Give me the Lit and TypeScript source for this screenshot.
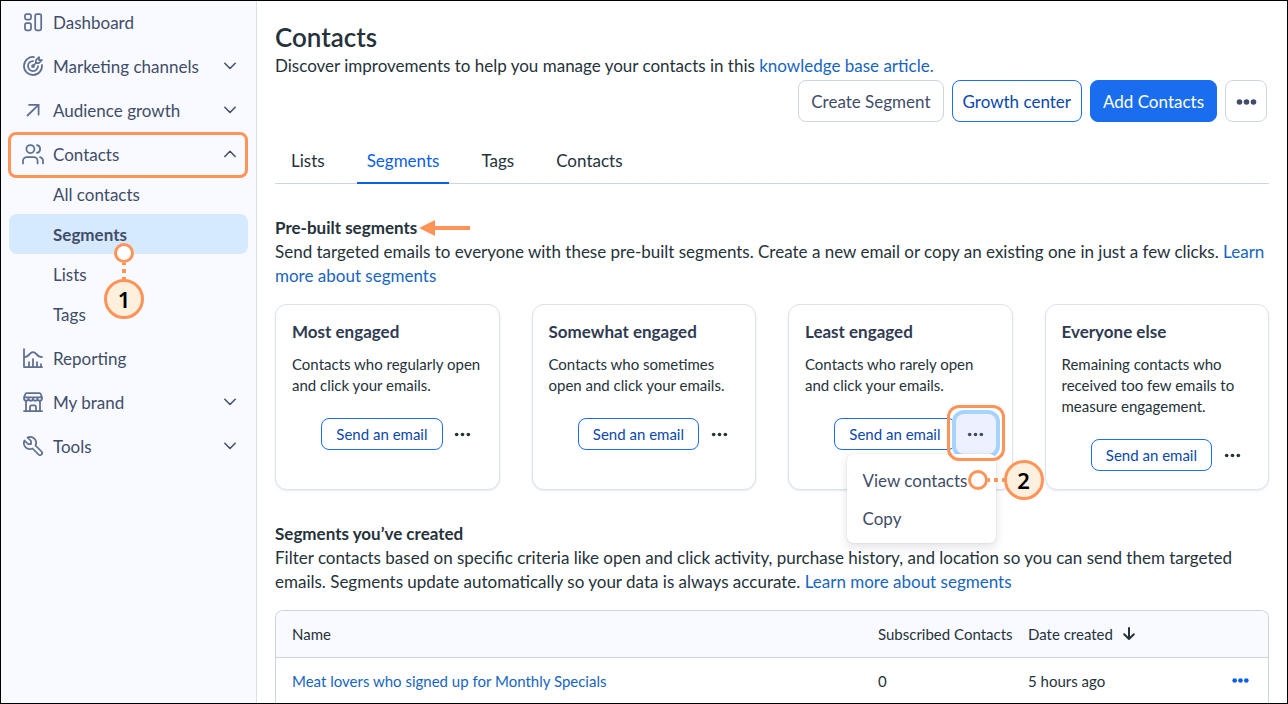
import { LitElement, html, svg, css, nothing } from "lit";
import { customElement, property } from "lit/decorators.js";
import { classMap } from "lit/directives/class-map.js";

const ICONS: Record<string, unknown> = {
  dashboard: svg`<rect x="4" y="4" width="6" height="5.6" rx="1.6"/><rect x="4" y="13" width="6" height="7.4" rx="1.6"/><rect x="14.2" y="4" width="6" height="16.4" rx="1.6"/>`,
  target: svg`<circle cx="12" cy="12" r="1"/><path d="M12 7a5 5 0 1 0 5 5"/><path d="M13 3.055a9 9 0 1 0 7.941 7.945"/><path d="M15 6v3h3l3-3h-3V3z"/><path d="M15 9l-3 3"/>`,
  growth: svg`<path d="M6.5 17.5 17.5 6.8"/><path d="M8 6.8h9.6v9.7"/>`,
  people: svg`<circle cx="9.4" cy="7" r="4"/><path d="M16.6 21.4v-2.4a4 4 0 0 0-4-4H6a4 4 0 0 0-4 4v2.4"/><path d="M22 21.4v-2.4a4 4 0 0 0-3-3.9"/><path d="M16 3.1a4 4 0 0 1 0 7.8"/>`,
  chart: svg`<path d="M3 3v18h18"/><path d="M20 18v3M16 16v5M12 13v8M8 16v5"/><path d="M3 11c6 0 5-5 9-5s3 5 9 5"/>`,
  store: svg`<path d="M3 21h18M5 21V11M19 21V11"/><path d="M9 21v-4a1.6 1.6 0 0 1 1.6-1.6h2.8A1.6 1.6 0 0 1 15 17v4"/><path d="M3 7.4 4.2 4.2A1.6 1.6 0 0 1 5.7 3h12.6a1.6 1.6 0 0 1 1.5 1.2L21 7.4v1a2.25 2.25 0 0 1-4.5 0 2.25 2.25 0 0 1-4.5 0 2.25 2.25 0 0 1-4.5 0 2.25 2.25 0 0 1-4.5 0zM3 7.4h18"/>`,
  tool: svg`<path d="M7 10h3V7L6.5 3.5a6 6 0 0 1 8 8l6 6a2 2 0 0 1-3 3l-6-6a6 6 0 0 1-8-8z"/>`,
};

const chevron = (up: boolean) => html`<svg class="chevron" viewBox="0 0 12 8" aria-hidden="true"><path d=${up ? "M.8 6.5 6 1.3l5.2 5.2" : "M.8 1.3 6 6.5l5.2-5.2"} /></svg>`;

const dots = (cls: string, r: number) => html`<svg class=${cls} viewBox="0 0 20 6" aria-hidden="true"><circle cx="3" cy="3" r=${r}/><circle cx="10" cy="3" r=${r}/><circle cx="17" cy="3" r=${r}/></svg>`;

const base = css`
  * { box-sizing: border-box; }
  a { text-decoration: none; color: inherit; }
  button { font: inherit; cursor: pointer; margin: 0; }
  svg { display: block; flex: none; }
`;

@customElement("step-marker")
class StepMarker extends LitElement {
  @property() label = "";
  @property({ reflect: true }) direction = "down";
  static styles = css`
    :host { position: absolute; display: flex; align-items: center; z-index: 5; }
    :host([direction="down"]) { flex-direction: column; }
    .ring { box-sizing: border-box; width: 20px; height: 20px; border: 3px solid #ff9358; border-radius: 50%; background: #fff; }
    .line { width: 16px; height: 4px; background: linear-gradient(90deg, #ff9358 0 2px, transparent 2px 6px, #ff9358 6px 10px, transparent 10px 14px, #ff9358 14px 16px); }
    :host([direction="down"]) .line { width: 4px; height: 16px; background: linear-gradient(#ff9358 0 2px, transparent 2px 6px, #ff9358 6px 10px, transparent 10px 14px, #ff9358 14px 16px); }
    .disc { box-sizing: border-box; width: 40px; height: 40px; display: grid; place-items: center; border: 3px solid #ff9358; border-radius: 50%; background: #ffefdd; color: #000; font: 600 22px/24px "Noto Sans", sans-serif; }
  `;
  render() {
    return html`<span class="ring"></span><span class="line"></span><span class="disc">${this.label}</span>`;
  }
}

interface NavItem { label: string; icon: string; expandable?: boolean; children?: string[]; }

const NAV: NavItem[] = [
  { label: "Dashboard", icon: "dashboard" },
  { label: "Marketing channels", icon: "target", expandable: true },
  { label: "Audience growth", icon: "growth", expandable: true },
  { label: "Contacts", icon: "people", expandable: true, children: ["All contacts", "Segments", "Lists", "Tags"] },
  { label: "Reporting", icon: "chart" },
  { label: "My brand", icon: "store", expandable: true },
  { label: "Tools", icon: "tool", expandable: true },
];

@customElement("side-nav")
class SideNav extends LitElement {
  static styles = [base, css`
    :host { display: block; }
    nav { display: flex; flex-direction: column; gap: 4px; padding: 1px 8px; }
    .item, .sub { width: 100%; height: 40px; display: flex; align-items: center; border: 0; border-radius: 8px; background: none; color: #414d68; text-align: left; }
    .item { gap: 8px; padding: 0 12px; position: relative; }
    .icon { width: 24px; height: 24px; fill: none; stroke: #5f6f8f; stroke-width: 1.75; stroke-linecap: round; stroke-linejoin: round; }
    .chevron { width: 12px; height: 8px; fill: none; stroke: #414d68; stroke-width: 1.5; stroke-linecap: round; stroke-linejoin: round; }
    .text { flex: 1; padding-top: 1px; }
    .callout::after { content: ""; position: absolute; inset: -2px 0 -4px -1px; border: 3px solid #ff9358; border-radius: 8px; pointer-events: none; }
    .sub { position: relative; padding: 1px 44px 0; }
    .current { background: #d5e9ff; font-weight: 700; }
    step-marker { left: 95px; top: 29px; font-weight: 400; }
  `];
  render() {
    return html`<nav aria-label="Main">
      ${NAV.map((n) => {
        const body = html`<svg class="icon" viewBox="0 0 24 24" aria-hidden="true">${ICONS[n.icon]}</svg><span class="text">${n.label}</span>${n.expandable ? chevron(!!n.children) : nothing}`;
        const item = n.expandable
          ? html`<button class=${classMap({ item: true, callout: !!n.children })} aria-expanded=${n.children ? "true" : "false"}>${body}</button>`
          : html`<a class="item" href="#">${body}</a>`;
        return html`<div>${item}${n.children?.map((c) => html`<a href="#" class=${classMap({ sub: true, current: c === "Segments" })}>${c}${c === "Segments" ? html`<step-marker label="1"></step-marker>` : nothing}</a>`)}</div>`;
      })}
    </nav>`;
  }
}

@customElement("segment-card")
class SegmentCard extends LitElement {
  @property() heading = "";
  @property() text = "";
  @property({ type: Boolean }) open = false;
  static styles = [base, css`
    :host { display: block; border: 1px solid #dce2ee; border-radius: 12px; padding: 16px 16px 14px; background: #fff; box-shadow: 0 1px 2px rgba(60, 80, 140, 0.12); }
    h3 { margin: 0 0 12px; font-size: 17px; line-height: 21px; font-weight: 700; color: #2f3b53; }
    p { margin: 0 0 18px; font-size: 15px; line-height: 21px; color: #25323a; }
    .actions { display: flex; justify-content: flex-end; align-items: center; position: relative; }
    .send { height: 32px; padding: 0 14px; border: 1px solid #1a6dee; border-radius: 8px; background: #fff; color: #0a48ab; font-size: 15px; line-height: 20px; white-space: nowrap; }
    .more { width: 40px; height: 40px; display: grid; place-items: center; border: 0; border-radius: 8px; background: none; padding: 0; }
    .dots { width: 17px; height: 5px; fill: #25323a; }
    .anchor { position: relative; }
    .open .more { background: #edf0ff; box-shadow: 0 0 0 4px #a6d3ff; }
    .open .dots { fill: #414d68; }
    .open::after { content: ""; position: absolute; inset: -9px -9px -7px; border: 3px solid #ff9358; border-radius: 12px; z-index: 3; pointer-events: none; }
    .menu { position: absolute; top: 40px; right: 0; z-index: 2; width: 149px; padding: 7px 0 6px; border-radius: 6px; background: #fff; box-shadow: 0 0 1px rgba(60, 80, 140, 0.35), 0 4px 10px rgba(40, 50, 80, 0.14); }
    .menu button { display: block; width: 100%; height: 38px; padding: 1px 16px 0; border: 0; background: none; color: #414d68; text-align: left; font-size: 17px; white-space: nowrap; }
    step-marker { left: 12px; top: 46px; }
  `];
  render() {
    return html`<h3>${this.heading}</h3><p>${this.text}</p>
      <div class="actions">
        <button class="send">Send an email</button>
        <div class=${classMap({ anchor: true, open: this.open })}>
          <button class="more" aria-label="More actions" aria-expanded=${this.open ? "true" : "false"}>${dots("dots", 2.2)}</button>
          ${this.open ? html`<div class="menu" role="menu"><button role="menuitem">View contacts</button><button role="menuitem">Copy</button></div><step-marker label="2" direction="right"></step-marker>` : nothing}
        </div>
      </div>`;
  }
}

const CARDS = [
  { heading: "Most engaged", text: "Contacts who regularly open and click your emails." },
  { heading: "Somewhat engaged", text: "Contacts who sometimes open and click your emails." },
  { heading: "Least engaged", text: "Contacts who rarely open and click your emails.", open: true },
  { heading: "Everyone else", text: "Remaining contacts who received too few emails to measure engagement." },
];

@customElement("app-root")
class AppRoot extends LitElement {
  static styles = [base, css`
    :host { display: block; font: 400 17px/24px Lato, "Liberation Sans", sans-serif; color: #25323a; }
    .shell { display: grid; grid-template-columns: 256px minmax(0, 1fr); height: 100vh; overflow: hidden; border: 1px solid #000; background: #fff; }
    side-nav { background: #f8faff; border-right: 1px solid #d9e0ee; }
    main { padding: 19px 18px 0; }
    h1 { margin: 0; font-size: 26px; line-height: 34px; font-weight: 600; }
    h2 { margin: 0; font-size: 17px; line-height: 24px; font-weight: 700; }
    p { margin: 0; }
    .link { color: #1765bf; }
    .toolbar { display: flex; justify-content: flex-end; gap: 8px; padding: 2px 2px 0 0; }
    .btn { height: 42px; padding: 2px 12px 0; border: 1px solid #cdd4e2; border-radius: 8px; background: #fff; color: #414d68; }
    .outline { padding: 2px 10px 0; border-color: #1a6dee; color: #0a48ab; }
    .primary { border-color: #1a6dee; background: #1a6dee; color: #fff; }
    .square { width: 42px; padding: 2px 0 0; display: grid; place-items: center; }
    .big { width: 21px; height: 6px; fill: #414d68; }
    .tabs { display: flex; gap: 22px; margin: 16px 0 32px; padding: 0 6px; border-bottom: 1px solid #cbd6da; }
    .tab { padding: 12px 10px 9px; border-bottom: 2px solid transparent; line-height: 22px; }
    .tab.active { color: #0c5fe5; border-color: #0c5fe5; margin-bottom: -1px; }
    .heading { display: flex; align-items: center; gap: 2px; }
    .arrow { width: 51px; height: 16px; fill: #ff9358; }
    .cards { display: grid; grid-template-columns: repeat(4, minmax(0, 1fr)); gap: 32px; margin: 16px 0 32px; }
    .table-box { margin-top: 16px; border: 1px solid #cbd6da; border-bottom: 0; border-radius: 8px 8px 0 0; overflow: hidden; }
    table { width: 100%; border-collapse: collapse; table-layout: fixed; font-size: 15px; }
    th, td { height: 46px; padding: 0 0 0 16px; text-align: left; font-weight: 400; }
    td { height: 47px; }
    th { background: #f8faff; border-bottom: 1px solid #cbd6da; white-space: nowrap; }
    .c-count { width: 150px; }
    .c-date { width: 204px; }
    .c-menu { width: 52px; }
    .sort { display: flex; align-items: center; gap: 10px; padding: 0; border: 0; background: none; color: inherit; }
    .sort svg { width: 12px; height: 13px; fill: none; stroke: #25323a; stroke-width: 2; stroke-linecap: round; stroke-linejoin: round; }
    .row-menu { display: block; padding: 8px 0; border: 0; background: none; }
    .blue { width: 17px; height: 5px; fill: #0c5fe5; }
  `];
  render() {
    return html`<div class="shell">
      <side-nav></side-nav>
      <main>
        <h1>Contacts</h1>
        <p>Discover improvements to help you manage your contacts in this <a class="link" href="#">knowledge base article.</a></p>
        <div class="toolbar">
          <button class="btn">Create Segment</button>
          <button class="btn outline">Growth center</button>
          <button class="btn primary">Add Contacts</button>
          <button class="btn square" aria-label="More">${dots("big", 2.8)}</button>
        </div>
        <nav class="tabs" aria-label="Contacts sections">
          ${["Lists", "Segments", "Tags", "Contacts"].map((t) => html`<a href="#" class=${classMap({ tab: true, active: t === "Segments" })}>${t}</a>`)}
        </nav>
        <section>
          <div class="heading"><h2>Pre-built segments</h2><svg class="arrow" viewBox="0 0 51 16" aria-hidden="true"><path d="M0 8 16 0v6h35v4H16v6z"/></svg></div>
          <p>Send targeted emails to everyone with these pre-built segments. Create a new email or copy an existing one in just a few clicks. <a class="link" href="#">Learn more about segments</a></p>
          <div class="cards">${CARDS.map((c) => html`<segment-card .heading=${c.heading} .text=${c.text} .open=${!!c.open}></segment-card>`)}</div>
        </section>
        <section>
          <h2>Segments you’ve created</h2>
          <p>Filter contacts based on specific criteria like open and click activity, purchase history, and location so you can send them targeted emails. Segments update automatically so your data is always accurate. <a class="link" href="#">Learn more about segments</a></p>
          <div class="table-box"><table>
            <colgroup><col><col class="c-count"><col class="c-date"><col class="c-menu"></colgroup>
            <thead><tr><th scope="col">Name</th><th scope="col">Subscribed Contacts</th><th scope="col" aria-sort="descending"><button class="sort">Date created <svg viewBox="0 0 12 13" aria-hidden="true"><path d="M6 1v11M1.2 7.2 6 12l4.8-4.8"/></svg></button></th><th></th></tr></thead>
            <tbody><tr><td><a class="link" href="#">Meat lovers who signed up for Monthly Specials</a></td><td>0</td><td>5 hours ago</td><td><button class="row-menu" aria-label="Row actions">${dots("blue", 2.8)}</button></td></tr></tbody>
          </table></div>
        </section>
      </main>
    </div>`;
  }
}
